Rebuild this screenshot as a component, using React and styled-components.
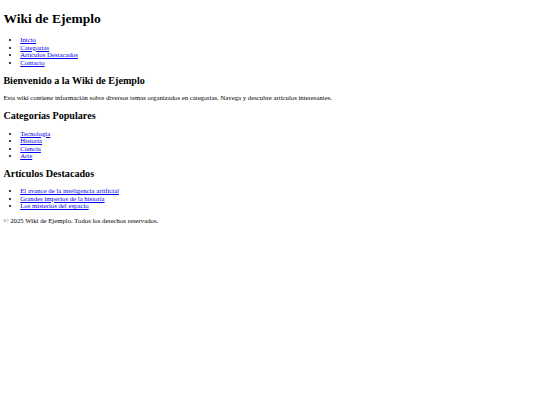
import React from "react";
import styled, { createGlobalStyle } from "styled-components";

const GlobalStyle = createGlobalStyle`
  html, body {
    background: #fff;
  }
  body {
    margin: 3.375px;
    font-family: "Liberation Serif", "Times New Roman", serif;
    font-size: 6.75px;
    line-height: 7.45px;
    color: #000;
  }
`;

const nav = ["Inicio", "Categorías", "Artículos Destacados", "Contacto"];
const categories = ["Tecnología", "Historia", "Ciencia", "Arte"];
const articles = [
  "El avance de la inteligencia artificial",
  "Grandes imperios de la historia",
  "Los misterios del espacio",
];

const App = () => {
  return (
    <>
      <GlobalStyle />
      <header>
        <StyledTitle>Wiki de Ejemplo</StyledTitle>
        <nav>
          <StyledList>
            {nav.map((item) => (
              <li key={item}>
                <StyledLink href="#">{item}</StyledLink>
              </li>
            ))}
          </StyledList>
        </nav>
      </header>
      <main>
        <section>
          <StyledHeading>Bienvenido a la Wiki de Ejemplo</StyledHeading>
          <StyledText>
            Esta wiki contiene información sobre diversos temas organizados en
            categorías. Navega y descubre artículos interesantes.
          </StyledText>
        </section>
        <section>
          <StyledHeading>Categorías Populares</StyledHeading>
          <StyledList>
            {categories.map((item) => (
              <li key={item}>
                <StyledLink href="#">{item}</StyledLink>
              </li>
            ))}
          </StyledList>
        </section>
        <section>
          <StyledHeading>Artículos Destacados</StyledHeading>
          <StyledList>
            {articles.map((item) => (
              <li key={item}>
                <StyledLink href="#">{item}</StyledLink>
              </li>
            ))}
          </StyledList>
        </section>
      </main>
      <footer>
        <StyledText>© 2025 Wiki de Ejemplo. Todos los derechos reservados.</StyledText>
      </footer>
    </>
  );
};

//===== Styles
const StyledTitle = styled.h1`
  font-size: 13.5px;
  line-height: 14.9px;
  font-weight: bold;
  margin: 9.05px 0;
`;

const StyledHeading = styled.h2`
  font-size: 10.125px;
  line-height: 11.2px;
  font-weight: bold;
  margin: 8.4px 0;
`;

const StyledText = styled.p`
  margin: 6.75px 0;
`;

const StyledList = styled.ul`
  margin: 6.75px 0;
  padding-left: 16.875px;
  list-style: disc;
`;

const StyledLink = styled.a`
  color: #0000ee;
  text-decoration: underline;
`;

export default App;
